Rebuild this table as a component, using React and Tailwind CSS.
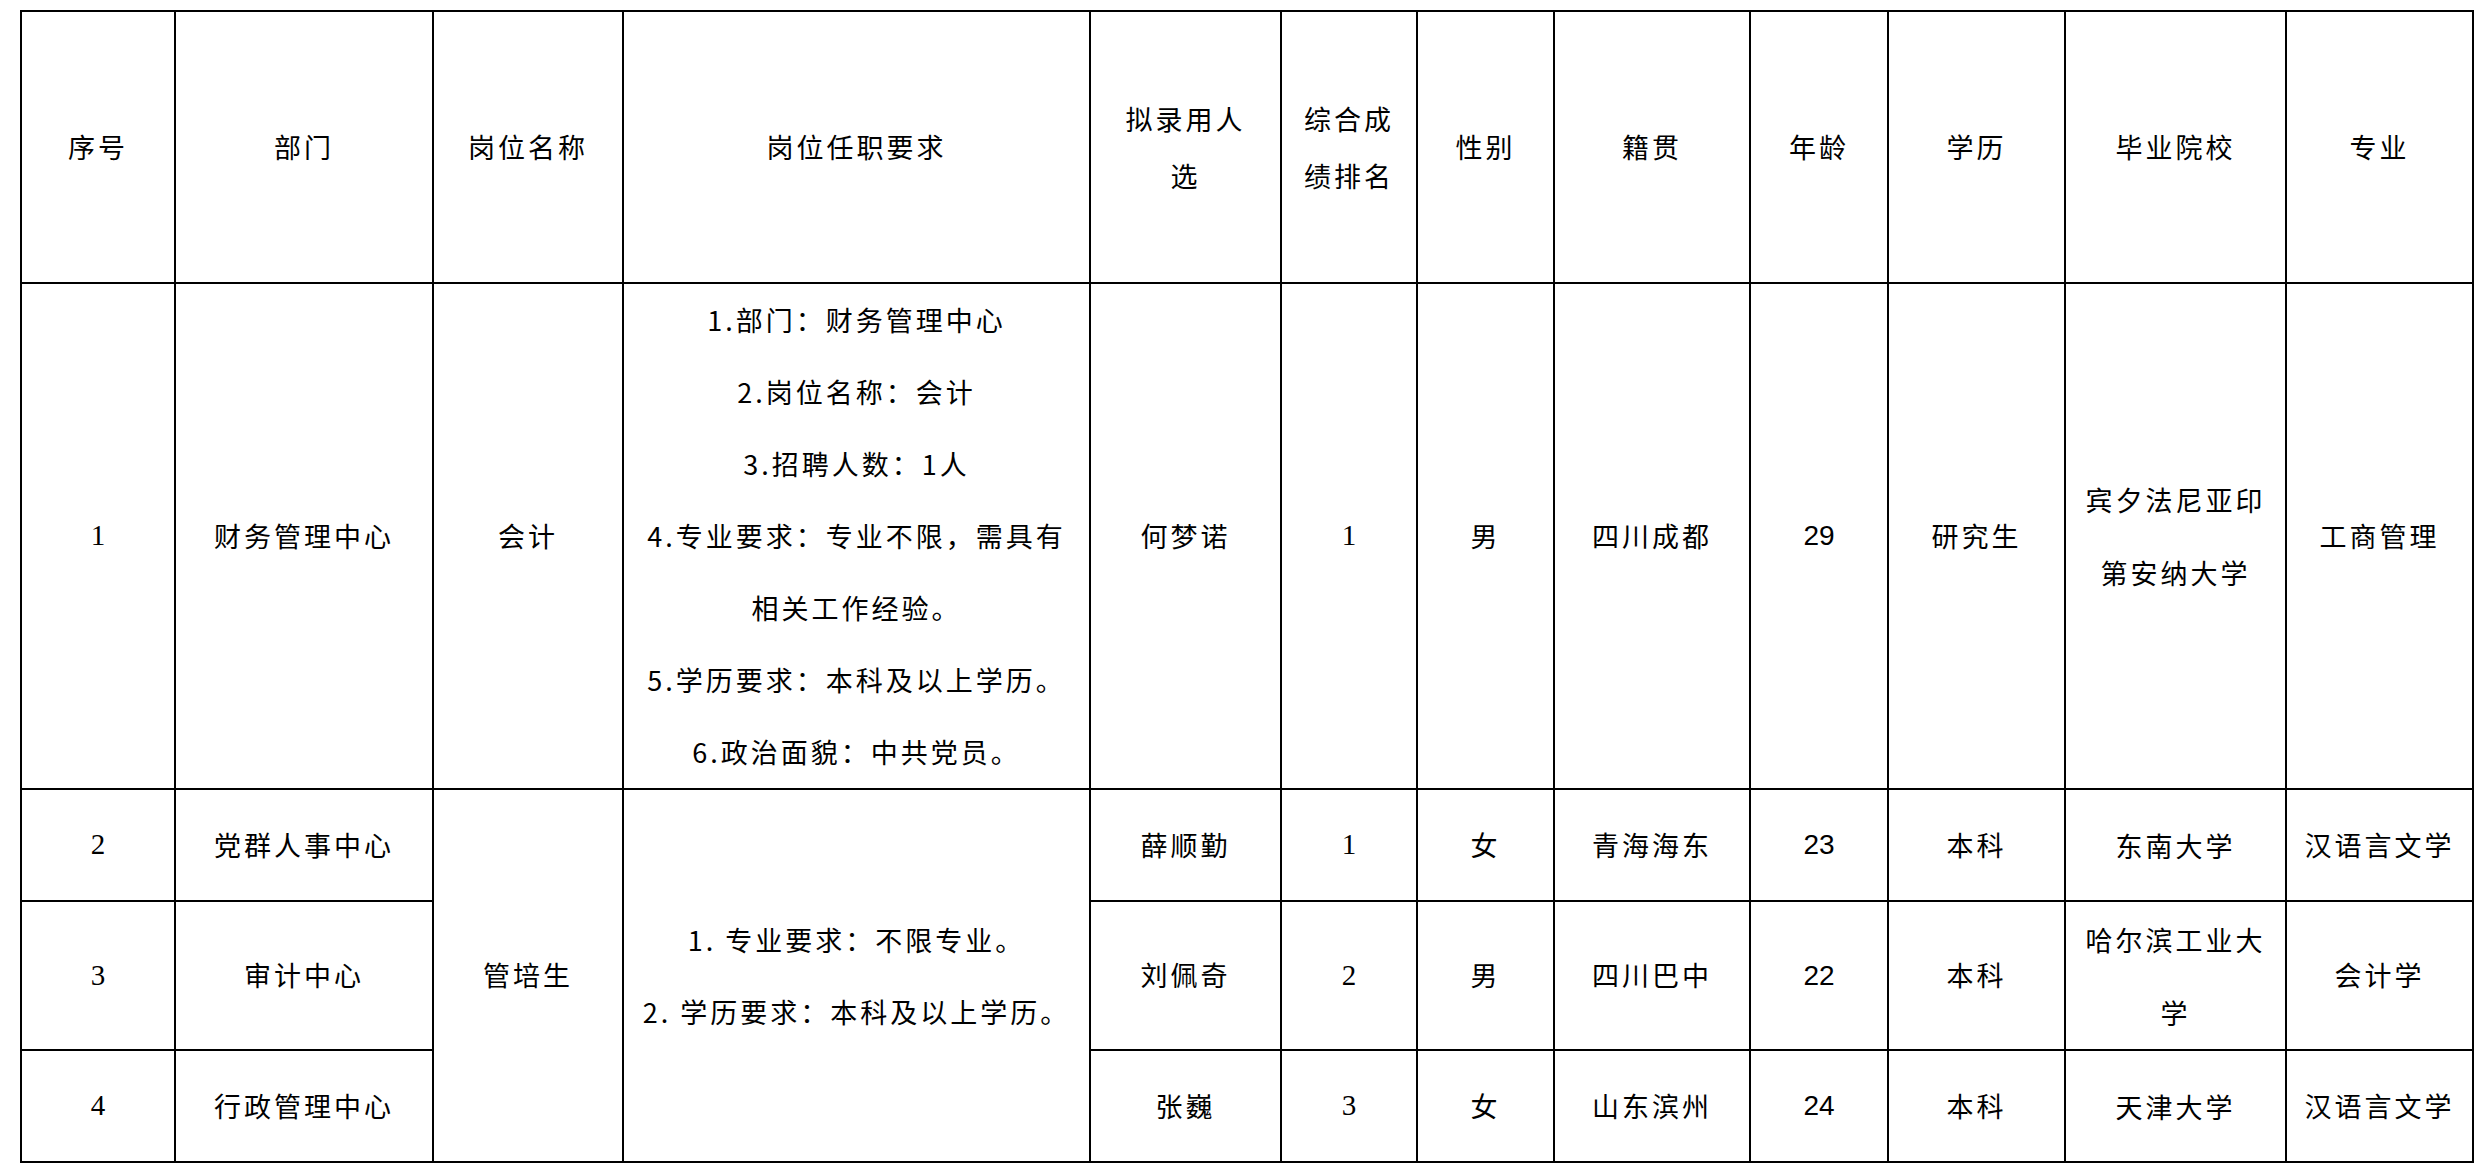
import React from "react";

const cjk = "font-['Noto_Sans_CJK_SC',sans-serif] text-[27px] tracking-[3px] font-normal";
const serifNum = "font-['Liberation_Serif',serif] text-[29px]";
const sansNum = "font-['Liberation_Sans',sans-serif] text-[28px]";
const cell = "border-2 border-black text-center align-middle p-0 text-black";

const rows = [
  {
    no: "1",
    dept: "财务管理中心",
    name: "何梦诺",
    rank: "1",
    sex: "男",
    home: "四川成都",
    age: "29",
    edu: "研究生",
    school: ["宾夕法尼亚印", "第安纳大学"],
    major: "工商管理",
    h: "h-[506px]",
  },
  {
    no: "2",
    dept: "党群人事中心",
    name: "薛顺勤",
    rank: "1",
    sex: "女",
    home: "青海海东",
    age: "23",
    edu: "本科",
    school: ["东南大学"],
    major: "汉语言文学",
    h: "h-[112px]",
  },
  {
    no: "3",
    dept: "审计中心",
    name: "刘佩奇",
    rank: "2",
    sex: "男",
    home: "四川巴中",
    age: "22",
    edu: "本科",
    school: ["哈尔滨工业大", "学"],
    major: "会计学",
    h: "h-[149px]",
  },
  {
    no: "4",
    dept: "行政管理中心",
    name: "张巍",
    rank: "3",
    sex: "女",
    home: "山东滨州",
    age: "24",
    edu: "本科",
    school: ["天津大学"],
    major: "汉语言文学",
    h: "h-[112px]",
  },
];

const req1 = [
  "1.部门：财务管理中心",
  "2.岗位名称：会计",
  "3.招聘人数：1人",
  "4.专业要求：专业不限，需具有",
  "相关工作经验。",
  "5.学历要求：本科及以上学历。",
  "6.政治面貌：中共党员。",
];

const req2 = ["1. 专业要求：不限专业。", "2. 学历要求：本科及以上学历。"];

const widths = [154, 258, 190, 467, 191, 136, 137, 196, 138, 177, 221, 187];

export default function App() {
  return (
    <div className="w-[2480px] h-[1167px] bg-white overflow-hidden">
      <table className="ml-[20px] mt-[10px] w-[2452px] table-fixed border-collapse">
        <colgroup>
          {widths.map((w, i) => (
            <col key={i} style={{ width: w }} />
          ))}
        </colgroup>
        <thead>
          <tr className="h-[272px]">
            <th className={`${cell} ${cjk}`}>序号</th>
            <th className={`${cell} ${cjk}`}>部门</th>
            <th className={`${cell} ${cjk}`}>岗位名称</th>
            <th className={`${cell} ${cjk}`}>岗位任职要求</th>
            <th className={`${cell} ${cjk} leading-[57px]`}>
              拟录用人
              <br />选
            </th>
            <th className={`${cell} ${cjk} leading-[57px]`}>
              综合成
              <br />
              绩排名
            </th>
            <th className={`${cell} ${cjk}`}>性别</th>
            <th className={`${cell} ${cjk}`}>籍贯</th>
            <th className={`${cell} ${cjk}`}>年龄</th>
            <th className={`${cell} ${cjk}`}>学历</th>
            <th className={`${cell} ${cjk}`}>毕业院校</th>
            <th className={`${cell} ${cjk}`}>专业</th>
          </tr>
        </thead>
        <tbody>
          {rows.map((r, i) => (
            <tr key={r.no} className={r.h}>
              <td className={`${cell} ${serifNum}`}>{r.no}</td>
              <td className={`${cell} ${cjk}`}>{r.dept}</td>
              {i === 0 && (
                <>
                  <td className={`${cell} ${cjk}`}>会计</td>
                  <td className={`${cell} ${cjk} leading-[72px]`}>
                    {req1.map((line) => (
                      <div key={line}>{line}</div>
                    ))}
                  </td>
                </>
              )}
              {i === 1 && (
                <>
                  <td rowSpan={3} className={`${cell} ${cjk}`}>
                    管培生
                  </td>
                  <td rowSpan={3} className={`${cell} ${cjk} leading-[72px]`}>
                    {req2.map((line) => (
                      <div key={line}>{line}</div>
                    ))}
                  </td>
                </>
              )}
              <td className={`${cell} ${cjk}`}>{r.name}</td>
              <td className={`${cell} ${serifNum}`}>{r.rank}</td>
              <td className={`${cell} ${cjk}`}>{r.sex}</td>
              <td className={`${cell} ${cjk}`}>{r.home}</td>
              <td className={`${cell} ${sansNum}`}>{r.age}</td>
              <td className={`${cell} ${cjk}`}>{r.edu}</td>
              <td className={`${cell} ${cjk} leading-[73px]`}>
                {r.school.map((s) => (
                  <div key={s}>{s}</div>
                ))}
              </td>
              <td className={`${cell} ${cjk}`}>{r.major}</td>
            </tr>
          ))}
        </tbody>
      </table>
    </div>
  );
}
